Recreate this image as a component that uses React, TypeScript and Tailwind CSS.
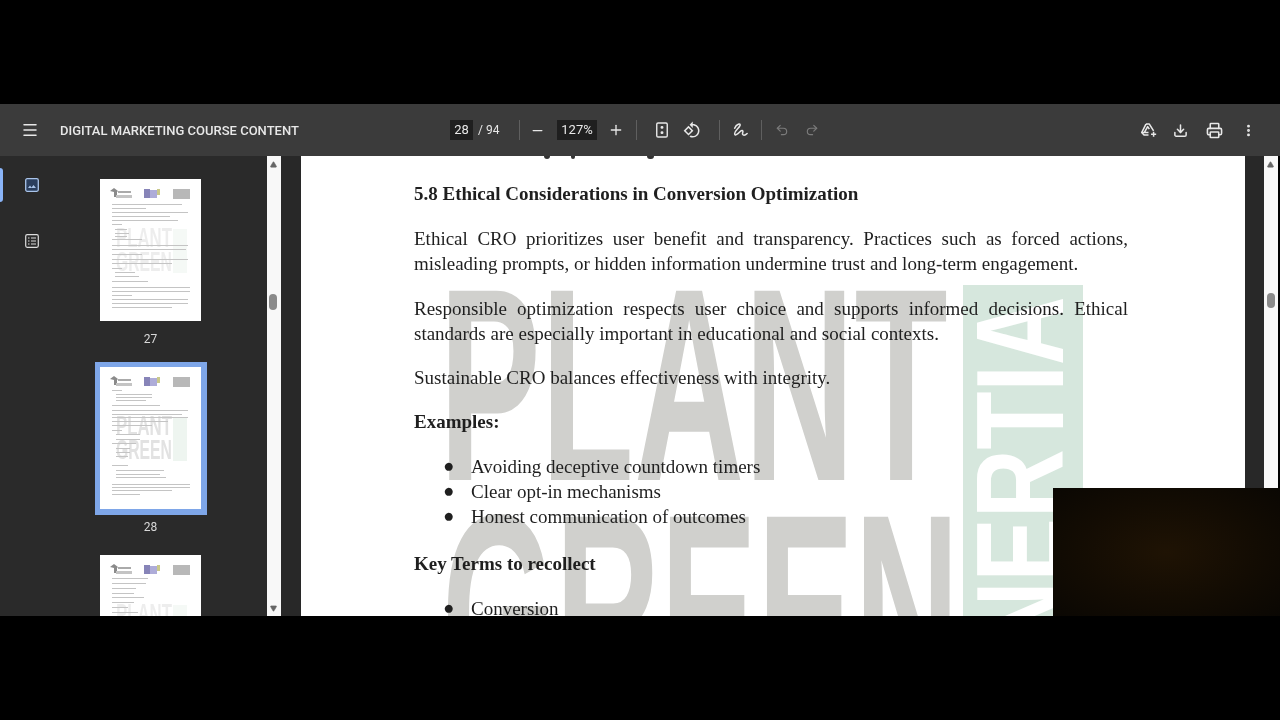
import { Menu, Minus, Plus, Undo2, Redo2, Download, Printer, EllipsisVertical, Triangle } from "lucide-react";

const serif = "font-['Liberation_Serif','Times_New_Roman',serif]";

// greeked text lines of the page previews: [y, x, width]
const page27 = [[25, 12, 70], [29, 12, 34], [33, 12, 76], [37, 12, 58], [41, 12, 66], [45, 12, 10], [50, 15, 12], [54, 15, 14], [57, 15, 12], [60, 12, 30], [66, 12, 76], [70, 12, 74], [75, 12, 30], [80, 12, 76], [84, 12, 60], [89, 12, 10], [93, 15, 20], [97, 15, 24], [102, 12, 36], [108, 12, 78], [112, 12, 78], [116, 12, 20], [120, 12, 76], [124, 12, 76], [128, 12, 60]];
const page28 = [[23, 12, 10], [27, 16, 36], [30, 16, 36], [33, 16, 30], [38, 12, 48], [43, 12, 76], [47, 12, 70], [50, 12, 76], [54, 12, 56], [58, 12, 40], [63, 12, 10], [67, 16, 24], [72, 16, 24], [76, 12, 24], [81, 16, 14], [85, 16, 14], [89, 16, 12], [98, 12, 16], [103, 16, 48], [107, 16, 44], [110, 16, 50], [117, 12, 78], [120, 12, 78], [123, 12, 60], [127, 12, 28]];
const page29 = [[23, 12, 36], [28, 12, 34], [33, 12, 24], [38, 12, 22], [42, 12, 32], [47, 12, 22], [52, 12, 16], [57, 12, 26], [62, 12, 28], [67, 12, 60], [72, 12, 60], [78, 12, 40], [84, 12, 70], [90, 12, 70], [96, 12, 50], [102, 12, 30]];

function Sep({ className }: { className: string }) {
  return <div className={`h-5 w-px shrink-0 bg-[#5f5f5f] ${className}`} />;
}

function Thumb({ lines, opacity }: { lines: number[][]; opacity: string }) {
  return (
    <svg viewBox="0 0 101 142" className="block h-[142px] w-[101px] shrink-0 bg-white">
      <g className="blur-[0.7px]">
        <g fill="#e2e2e2" fontWeight="700" fontFamily="Liberation Sans, sans-serif" fontSize="27" opacity={opacity}>
          <text x="16" y="68" textLength="56" lengthAdjust="spacingAndGlyphs">PLANT</text>
          <text x="16" y="92" textLength="56" lengthAdjust="spacingAndGlyphs">GREEN</text>
        </g>
        <rect x="73" y="50" width="14" height="44" fill="#eef5f0" opacity={opacity} />
        <path d="M10 12l4-3 4 3-1 1v5h-3v-5z" fill="#8a8a8a" />
        <rect x="18" y="12" width="13" height="2" fill="#aaa" />
        <rect x="16" y="16" width="16" height="3" fill="#c4c4c4" />
        <rect x="44" y="10" width="6" height="9" fill="#8784b8" />
        <rect x="50" y="11" width="7" height="8" fill="#aeacd8" />
        <rect x="57" y="10" width="3" height="6" fill="#c9c88a" />
        <rect x="73" y="10" width="17" height="10" fill="#b8b8b8" />
        {lines.map(([y, x, w]) => (
          <rect key={y} x={x} y={y} width={w} height="1" fill="#c4c4c4" />
        ))}
      </g>
    </svg>
  );
}

function Bullet({ children }: { children: string }) {
  return (
    <li className="flex h-[25.3px] items-center">
      <span className="w-[57px] shrink-0 pl-[29px] text-[18.7px] leading-none">●</span>
      <span>{children}</span>
    </li>
  );
}

export default function App() {
  return (
    <div className="flex h-[720px] w-[1280px] flex-col overflow-hidden bg-black pt-[104px] blur-[0.4px] font-['Roboto',sans-serif]">
      <header className="flex h-[52px] shrink-0 items-center bg-[#3b3b3b] text-[#e8e8e8]">
        <Menu size={18} className="ml-[21px]" />
        <div className="ml-[21px] w-[390px] pt-[2px] text-[13px] font-medium whitespace-nowrap">DIGITAL MARKETING COURSE CONTENT</div>
        <div className="flex h-5 w-[23px] items-center justify-center bg-[#1f1f1f] text-[13px]">28</div>
        <div className="ml-[5px] w-[41px] text-[12px]">/ 94</div>
        <Sep className="" />
        <Minus size={15} className="ml-[10px]" />
        <div className="ml-[12px] flex h-5 w-10 items-center justify-center bg-[#1f1f1f] text-[13px]">127%</div>
        <Plus size={16} className="ml-[11px]" />
        <Sep className="ml-[12px]" />
        <svg viewBox="0 0 16 18" className="ml-[18px] h-[16px] w-[14px]" fill="none" stroke="currentColor" strokeWidth="1.6">
          <rect x="2" y="1" width="12" height="16" rx="1.5" />
          <circle cx="8" cy="6" r="0.9" fill="currentColor" />
          <circle cx="8" cy="12" r="0.9" fill="currentColor" />
        </svg>
        <svg viewBox="0 0 24 24" className="ml-[14px] h-[18px] w-[18px]" fill="currentColor">
          <path d="M7.34 6.41L.86 12.9l6.49 6.48 6.49-6.48-6.5-6.49zM3.69 12.9l3.66-3.66L11 12.9l-3.66 3.66-3.65-3.66zm15.67-6.26C17.61 4.88 15.3 4 13 4V.76L8.76 5 13 9.24V6c1.79 0 3.58.68 4.95 2.05 2.73 2.73 2.73 7.17 0 9.9C16.58 19.32 14.79 20 13 20c-.97 0-1.94-.21-2.84-.61l-1.49 1.49C10.02 21.62 11.51 22 13 22c2.3 0 4.61-.88 6.36-2.64 3.52-3.51 3.52-9.21 0-12.72z" />
        </svg>
        <Sep className="ml-[18px]" />
        <svg viewBox="0 0 18 18" className="ml-[12px] h-4 w-4" fill="none" stroke="currentColor" strokeWidth="1.7" strokeLinecap="round">
          <path d="M3 7C5 2 10 1 9 4 8 7 3 10 3 13c0 3 3 1 6-2 2-2 4-2 3 1-1 3 2 4 5 1" />
        </svg>
        <Sep className="ml-[13px]" />
        <Undo2 size={14} className="ml-[13px] text-[#7b7b7b]" />
        <Redo2 size={14} className="ml-[16px] text-[#7b7b7b]" />
        <div className="ml-auto flex items-center gap-[18px] pr-[24px]">
          <svg viewBox="0 0 20 18" className="mr-[-2px] h-[16px] w-[17px]" fill="none" stroke="currentColor" strokeWidth="1.8" strokeLinejoin="round">
            <path d="M7 2h4l5 8M10 15H5l-3-3 5-10" />
            <path d="M5 12l4-7 2 3M2 12h8" />
            <path d="M16 11v6M13 14h6" />
          </svg>
          <Download size={15} strokeWidth={2.4} />
          <Printer size={17} strokeWidth={2.2} />
          <EllipsisVertical size={15} strokeWidth={2.6} />
        </div>
      </header>

      <div className="relative flex h-[460px] shrink-0 overflow-hidden">
        <aside className="flex w-[267px] shrink-0 bg-[#2a2a2a]">
          <div className="relative flex w-[64px] shrink-0 flex-col items-center pt-[22px]">
            <div className="absolute top-[12px] left-0 h-[34px] w-[3px] rounded-r-sm bg-[#8ab4f8]" />
            <svg viewBox="0 0 14 14" className="h-[14px] w-[14px]">
              <rect x="0.7" y="0.7" width="12.6" height="12.6" rx="1.5" fill="#2b3f5e" stroke="#a9c4ea" strokeWidth="1.3" />
              <path d="M3 10l2-2.5L6.5 9.5 8.5 7 11 10z" fill="#a9c4ea" />
            </svg>
            <svg viewBox="0 0 14 14" className="mt-[42px] h-[14px] w-[14px]" fill="none" stroke="#dcdcdc" strokeWidth="1.2">
              <rect x="0.7" y="0.7" width="12.6" height="12.6" rx="1.5" />
              <path d="M3 4h1.5M3 7h1.5M3 10h1.5M6 4h5M6 7h5M6 10h5" />
            </svg>
          </div>
          <div className="flex w-[173px] flex-col items-center pt-[23px] text-[12px] text-[#d8d8d8]">
            <Thumb lines={page27} opacity="0.6" />
            <div className="mt-[10px] h-[31px] shrink-0 leading-[16px]">27</div>
            <div className="shrink-0 border-[5px] border-r-[6px] border-b-[6px] border-[#7ea6e8]">
              <Thumb lines={page28} opacity="1" />
            </div>
            <div className="mt-[4px] h-[36px] shrink-0 leading-[16px]">28</div>
            <Thumb lines={page29} opacity="0.6" />
          </div>
        </aside>
        <div className="relative w-[14px] shrink-0 bg-[#f8f8f8]">
          <Triangle size={7} className="absolute top-[5px] left-[3px] fill-[#666] text-[#666]" />
          <div className="absolute top-[138px] left-[2px] h-[16px] w-[8px] rounded bg-[#8a8a8a]" />
          <Triangle size={7} className="absolute bottom-[4px] left-[3px] rotate-180 fill-[#666] text-[#666]" />
        </div>
        <div className="w-[20px] shrink-0 bg-[#282828]" />

        <main className={`relative w-[944px] shrink-0 overflow-hidden bg-white pt-[25px] pl-[113px] text-[19px] leading-[25px] text-[#1f1f1f] ${serif}`}>
          {/* watermark */}
          <div className="absolute top-[91px] left-[138px] origin-top-left scale-x-[0.555] font-['Liberation_Sans',sans-serif] text-[275px] leading-none font-bold whitespace-nowrap text-[#d0d0cd]">PLANT</div>
          <div className="absolute top-[317px] left-[141px] origin-top-left scale-x-[0.529] font-['Liberation_Sans',sans-serif] text-[275px] leading-none font-bold whitespace-nowrap text-[#d0d0cd]">GREEN</div>
          <div className="absolute top-[129px] left-[662px] h-[331px] w-[120px] bg-[#d6e7dd]">
            <div className="absolute top-[365px] left-[-6px] origin-top-left -rotate-90 scale-x-[0.76] font-['Liberation_Sans',sans-serif] text-[125px] leading-none font-bold whitespace-nowrap text-white">NERTIA</div>
          </div>

          {/* descenders of the line scrolled under the toolbar */}
          <span className="absolute top-0 left-[243px] h-[3px] w-[6px] rounded-b-full bg-[#333]" />
          <span className="absolute top-0 left-[270px] h-[3px] w-[4px] rounded-b-full bg-[#333]" />
          <span className="absolute top-0 left-[346px] h-[3px] w-[7px] rounded-b-full bg-[#333]" />

          <div className="relative w-[714px]">
            <h2 className="font-bold">5.8 Ethical Considerations in Conversion Optimization</h2>
            <p className="mt-[20px] text-justify">Ethical CRO prioritizes user benefit and transparency. Practices such as forced actions, misleading prompts, or hidden information undermine trust and long-term engagement.</p>
            <p className="mt-[20px] text-justify">Responsible optimization respects user choice and supports informed decisions. Ethical standards are especially important in educational and social contexts.</p>
            <p className="mt-[19px]">Sustainable CRO balances effectiveness with integrity.</p>
            <p className="mt-[19px] font-bold">Examples:</p>
            <ul className="mt-[19.5px]">
              <Bullet>Avoiding deceptive countdown timers</Bullet>
              <Bullet>Clear opt-in mechanisms</Bullet>
              <Bullet>Honest communication of outcomes</Bullet>
            </ul>
            <p className="mt-[22px] font-bold">Key Terms to recollect</p>
            <ul className="mt-[19px]">
              <Bullet>Conversion</Bullet>
            </ul>
          </div>
        </main>

        <div className="w-[19px] shrink-0 bg-[#282828]" />
        <div className="relative w-[14px] shrink-0 bg-[#f8f8f8]">
          <Triangle size={7} className="absolute top-[5px] left-[3px] fill-[#666] text-[#666]" />
          <div className="absolute top-[137px] left-[3px] h-[15px] w-[8px] rounded bg-[#8a8a8a]" />
        </div>

        <div className="absolute top-[332px] right-0 h-[128px] w-[227px] bg-[radial-gradient(ellipse_at_center,#1f1304_0%,#130c03_55%,#0a0703_100%)]" />
      </div>
    </div>
  );
}
